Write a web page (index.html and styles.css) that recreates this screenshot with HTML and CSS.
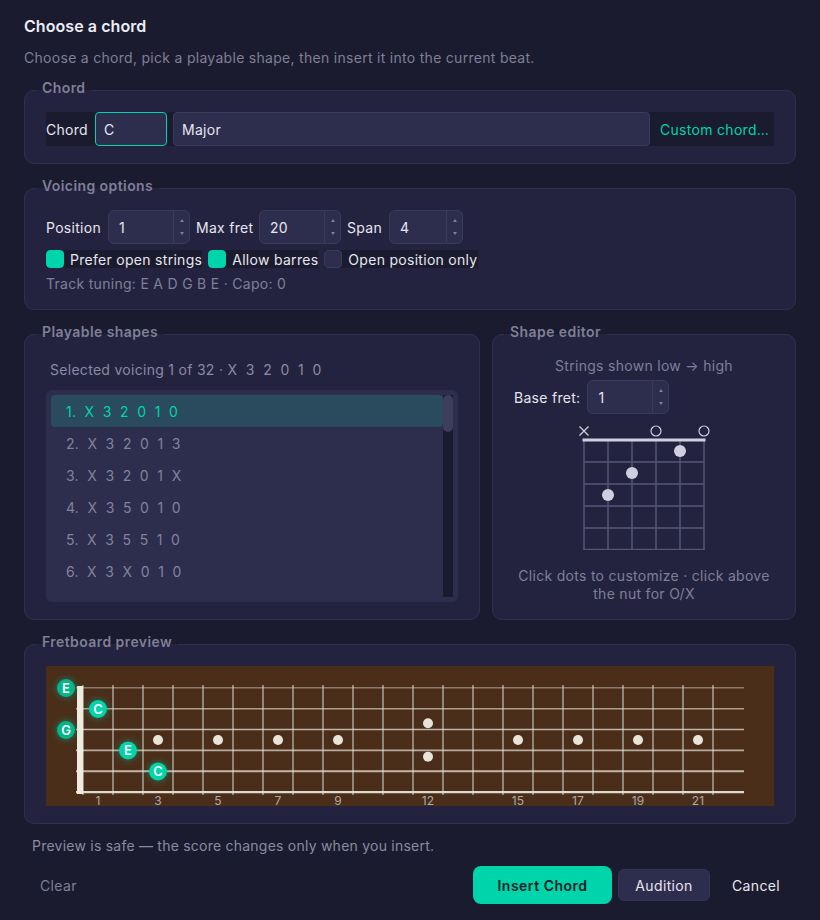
FILE: index.html
```html
<!DOCTYPE html>
<html lang="en">
<head>
<meta charset="utf-8">
<title>Choose a chord</title>
<link rel="stylesheet" href="styles.css">
</head>
<body>
<main class="dialog">
  <h1 class="title">Choose a chord</h1>
  <p class="subtitle">Choose a chord, pick a playable shape, then insert it into the current beat.</p>

  <fieldset class="group group-chord">
    <legend>Chord</legend>
    <div class="chord-row">
      <span class="dark-label">Chord</span>
      <div class="field field-root">C</div>
      <div class="gap-dark"></div>
      <div class="field field-quality">Major</div>
      <button class="link-btn">Custom chord…</button>
    </div>
  </fieldset>

  <fieldset class="group group-voicing">
    <legend>Voicing options</legend>
    <div class="spin-row">
      <span class="lbl lbl-pos">Position</span>
      <div class="spin w82"><span class="spin-val">1</span><span class="spin-btns"><i class="up"></i><i class="down"></i></span></div>
      <span class="lbl lbl-max">Max fret</span>
      <div class="spin w82"><span class="spin-val">20</span><span class="spin-btns"><i class="up"></i><i class="down"></i></span></div>
      <span class="lbl lbl-span">Span</span>
      <div class="spin w74"><span class="spin-val">4</span><span class="spin-btns"><i class="up"></i><i class="down"></i></span></div>
    </div>
    <div class="check-row">
      <label class="check"><span class="box on"></span><span class="check-text">Prefer open strings</span></label>
      <label class="check"><span class="box on"></span><span class="check-text">Allow barres</span></label>
      <label class="check"><span class="box"></span><span class="check-text">Open position only</span></label>
    </div>
    <p class="tuning">Track tuning: E A D G B E · Capo: 0</p>
  </fieldset>

  <div class="middle">
    <fieldset class="group group-shapes">
      <legend>Playable shapes</legend>
      <p class="selected">Selected voicing 1 of 32 · X  3  2  0  1  0</p>
      <div class="list">
        <ul class="items">
          <li class="item active">1.  X  3  2  0  1  0</li>
          <li class="item">2.  X  3  2  0  1  3</li>
          <li class="item">3.  X  3  2  0  1  X</li>
          <li class="item">4.  X  3  5  0  1  0</li>
          <li class="item">5.  X  3  5  5  1  0</li>
          <li class="item">6.  X  3  X  0  1  0</li>
        </ul>
        <div class="scrollbar"><div class="thumb"></div></div>
      </div>
    </fieldset>

    <fieldset class="group group-editor">
      <legend>Shape editor</legend>
      <p class="strings-note">Strings shown low → high</p>
      <div class="base-row">
        <span class="lbl">Base fret:</span>
        <div class="spin w82"><span class="spin-val">1</span><span class="spin-btns"><i class="up"></i><i class="down"></i></span></div>
      </div>
      <svg class="chord-svg" width="144" height="136" viewBox="0 0 144 136" aria-label="Chord diagram">
        <g stroke="#55557a" stroke-width="1.5" fill="none">
          <path d="M12 26V136M36 26V136M60 26V136M84 26V136M108 26V136M132 26V136"/>
          <path d="M12 48H132M12 70H132M12 92H132M12 114H132M11.2 135.5H132.8"/>
        </g>
        <path d="M10.500 26H133.500" stroke="#cfcfe0" stroke-width="3"/>
        <path d="M7.500 12.500L16.500 21.500M16.500 12.500L7.500 21.500" stroke="#cfcfe0" stroke-width="1.300" fill="none"/>
        <circle cx="84" cy="17" r="5" fill="none" stroke="#cfcfe0" stroke-width="1.200"/>
        <circle cx="132" cy="17" r="5" fill="none" stroke="#cfcfe0" stroke-width="1.200"/>
        <g fill="#cfcfe0">
          <circle cx="36" cy="81" r="6"/>
          <circle cx="60" cy="59" r="6"/>
          <circle cx="108" cy="37" r="6"/>
        </g>
      </svg>
      <p class="editor-note">Click dots to customize · click above the nut for O/X</p>
    </fieldset>
  </div>

  <fieldset class="group group-fretboard">
    <legend>Fretboard preview</legend>
    <svg class="fretboard" width="728" height="140" viewBox="0 0 728 140" aria-label="Fretboard">
      <defs>
        <pattern id="grain" width="4" height="4" patternUnits="userSpaceOnUse">
          <rect width="1" height="1" fill="#3f2714"/>
        </pattern>
        <filter id="glow" x="-60%" y="-60%" width="220%" height="220%">
          <feGaussianBlur stdDeviation="3"/>
        </filter>
      </defs>
      <rect width="728" height="140" fill="#4a2e1a"/>
      <rect width="728" height="140" fill="url(#grain)" opacity=".7"/>
      <g stroke="#a8a498" stroke-width="1.500">
        <path d="M37 19V129M67 19V129M97 19V129M127 19V129M157 19V129M187 19V129M217 19V129M247 19V129M277 19V129M307 19V129M337 19V129M367 19V129M397 19V129M427 19V129M457 19V129M487 19V129M517 19V129M547 19V129M577 19V129M607 19V129M637 19V129M667 19V129"/>
      </g>
      <g stroke="#e8e4d8">
        <path d="M30 21.800H698" stroke-width="1.500" opacity=".42"/>
        <path d="M30 42.700H698" stroke-width="1.500" opacity=".62"/>
        <path d="M30 63.600H698" stroke-width="1.500" opacity=".75"/>
        <path d="M30 84.400H698" stroke-width="1.800" opacity=".7"/>
        <path d="M30 105.300H698" stroke-width="2" opacity=".75"/>
        <path d="M30 126.200H698" stroke-width="2.200" opacity=".95"/>
      </g>
      <rect x="31" y="20" width="6" height="108" fill="#efebdf"/>
      <g fill="#e8e4d8">
        <circle cx="112" cy="74" r="5"/>
        <circle cx="172" cy="74" r="5"/>
        <circle cx="232" cy="74" r="5"/>
        <circle cx="292" cy="74" r="5"/>
        <circle cx="382" cy="57.300" r="5"/>
        <circle cx="382" cy="90.700" r="5"/>
        <circle cx="472" cy="74" r="5"/>
        <circle cx="532" cy="74" r="5"/>
        <circle cx="592" cy="74" r="5"/>
        <circle cx="652" cy="74" r="5"/>
      </g>
      <g class="fret-nums">
        <text x="52" y="139">1</text>
        <text x="112" y="139">3</text>
        <text x="172" y="139">5</text>
        <text x="232" y="139">7</text>
        <text x="292" y="139">9</text>
        <text x="382" y="139">12</text>
        <text x="472" y="139">15</text>
        <text x="532" y="139">17</text>
        <text x="592" y="139">19</text>
        <text x="652" y="139">21</text>
      </g>
      <g fill="#00d4aa" opacity=".35" filter="url(#glow)">
        <circle cx="20" cy="22" r="10"/>
        <circle cx="52" cy="43" r="10"/>
        <circle cx="20" cy="64" r="10"/>
        <circle cx="82" cy="84.500" r="10"/>
        <circle cx="112" cy="105.500" r="10"/>
      </g>
      <g>
        <circle cx="20" cy="22" r="9" fill="#00b78c"/>
        <circle cx="52" cy="43" r="9" fill="#00d4aa"/>
        <circle cx="20" cy="64" r="9" fill="#00b78c"/>
        <circle cx="82" cy="84.500" r="9" fill="#00d4aa"/>
        <circle cx="112" cy="105.500" r="9" fill="#00d4aa"/>
      </g>
      <g class="note-names">
        <text x="20" y="26.500">E</text>
        <text x="52" y="47.500">C</text>
        <text x="20" y="68.500">G</text>
        <text x="82" y="89">E</text>
        <text x="112" y="110">C</text>
      </g>
    </svg>
  </fieldset>

  <p class="preview-note">Preview is safe — the score changes only when you insert.</p>

  <footer class="actions">
    <button class="btn-clear">Clear</button>
    <div class="actions-right">
      <button class="btn-insert">Insert Chord</button>
      <button class="btn-audition">Audition</button>
      <button class="btn-cancel">Cancel</button>
    </div>
  </footer>
</main>
</body>
</html>
```

FILE: styles.css
```css
* { box-sizing: border-box; }
html, body { margin: 0; padding: 0; }
body {
  width: 820px;
  height: 920px;
  overflow: hidden;
  background: #1a1b2e;
  color: #e6e6f0;
  font-family: Inter, "Noto Sans", "Liberation Sans", sans-serif;
  font-size: 14px;
  letter-spacing: .29px;
}
p, ul, h1 { margin: 0; padding: 0; }
.dialog { padding: 17px 24px 0; display: flex; flex-direction: column; }
.title { font-size: 16px; font-weight: 600; line-height: 19px; color: #ecedf4; letter-spacing: .07px; }
.subtitle { margin-top: 13px; line-height: 17px; color: #7f7f98; height: 31px; }

.group {
  margin: 0;
  min-width: 0;
  padding: 0 21px 0;
  background: #23233f;
  border: 1px solid #2f2f50;
  border-radius: 10px;
}
.group legend {
  margin-left: -10px;
  padding: 0 6px 6px;
  font-size: 14px;
  line-height: 15px;
  font-weight: 600;
  color: #7f7f98;
  letter-spacing: .42px;
}
.group-chord { height: 84px; margin-bottom: 14px; }
.group-voicing { height: 132px; margin-bottom: 14px; }
.group-fretboard { height: 190px; }

.chord-row { display: flex; height: 34px; margin-top: 11px; background: #1a1b2e; }
.dark-label { width: 49px; height: 34px; line-height: 36px; text-align: left; color: #e6e6f0; }
.field {
  height: 34px;
  line-height: 34px;
  padding-left: 8px;
  background: #2d2d4e;
  border: 1px solid #3a3a5c;
  border-radius: 4px;
}
.field-root { width: 72px; border-color: #00d4aa; }
.gap-dark { width: 6px; }
.field-quality { width: 477px; }
.link-btn {
  flex: 1;
  border: 0;
  padding: 1px 0 0 10px;
  text-align: left;
  background: transparent;
  color: #00d4aa;
  font: inherit;
  letter-spacing: .3px;
}

.spin-row { display: flex; align-items: center; gap: 6px; margin-top: 11px; }
.lbl { height: 34px; line-height: 36px; color: #e6e6f0; white-space: nowrap; }
.lbl-pos { width: 56px; }
.lbl-max { width: 57px; }
.lbl-span { width: 36px; }
.spin {
  display: flex;
  height: 34px;
  background: #2d2d4e;
  border: 1px solid #3a3a5c;
  border-radius: 6px;
}
.w82 { width: 82px; }
.w74 { width: 74px; }
.spin-val { flex: 1; padding-left: 10px; line-height: 34px; }
.spin-btns {
  width: 16px;
  display: flex;
  flex-direction: column;
  align-items: center;
  justify-content: space-around;
  border-left: 1px solid #3a3a5c;
  padding: 3px 0;
}
.spin-btns i { display: block; width: 0; height: 0; border-left: 2.5px solid transparent; border-right: 2.5px solid transparent; }
.spin-btns .up { border-bottom: 3px solid #7f7f98; }
.spin-btns .down { border-top: 3px solid #7f7f98; }

.check-row { display: flex; gap: 6px; margin-top: 6px; }
.check { display: flex; align-items: flex-start; gap: 6px; background: #1a1b2e; height: 18px; }
.box { width: 18px; height: 18px; border-radius: 4px; background: #2d2d4e; border: 1px solid #3a3a5c; }
.box.on { background: #00d4aa; border-color: #00d4aa; }
.check-text { line-height: 20px; color: #e6e6f0; }
.tuning { margin-top: 7px; line-height: 17px; color: #7f7f98; }

.middle { display: flex; gap: 12px; margin-bottom: 14px; height: 296px; }
.group-shapes { width: 456px; height: 296px; }
.group-editor { width: 304px; height: 296px; }

.selected { margin: 16px 0 0 4px; line-height: 17px; color: #8a8aa2; white-space: pre; }
.list {
  display: flex;
  height: 212px;
  margin-top: 12px;
  padding: 5px;
  background: #2d2d4e;
  border-radius: 6px;
}
.items { flex: 1; list-style: none; }
.item {
  height: 32px;
  line-height: 34px;
  padding-left: 15px;
  border-radius: 4px;
  color: #82829c;
  white-space: pre;
  letter-spacing: .25px;
}
.item.active { background: #2a4a5e; color: #00d4aa; }
.scrollbar { width: 10px; background: #1a1b2e; }
.thumb { height: 37px; background: #3d3d5c; border-radius: 5px; }

.group-editor { display: flex; flex-direction: column; }
.strings-note { text-align: center; line-height: 17px; margin-top: 12px; color: #7f7f98; }
.base-row { display: flex; gap: 7px; margin-top: 6px; }
.chord-svg { display: block; margin: 0 auto; }
.editor-note { text-align: center; line-height: 18px; margin-top: 17px; color: #7f7f98; }

.fretboard { display: block; margin-top: 11px; overflow: visible; }
.fret-nums text { font-size: 12px; fill: #aeaaa6; text-anchor: middle; letter-spacing: .2px; font-family: Inter, "Liberation Sans", sans-serif; }
.note-names text { font-size: 13px; font-weight: 600; fill: #fff; text-anchor: middle; letter-spacing: 0; font-family: Inter, "Liberation Sans", sans-serif; }

.preview-note { margin: 13px 0 0 8px; line-height: 17px; color: #8a8aa2; letter-spacing: .23px; }
.actions { display: flex; align-items: center; justify-content: space-between; margin-top: 12px; }
.actions button { font: inherit; border: 0; letter-spacing: .35px; }
.btn-clear { background: transparent; color: #7f7f98; padding: 0 16px; }
.actions-right { display: flex; align-items: center; gap: 6px; }
.actions .btn-insert {
  width: 139px; height: 38px;
  border-radius: 8px;
  background: #00d4aa;
  color: #102028;
  font-weight: 600;
  letter-spacing: .5px;
}
.actions .btn-audition {
  width: 92px; height: 32px;
  border-radius: 6px;
  background: #2d2d4e;
  color: #e6e6f0;
  border: 1px solid #33335a;
}
.btn-cancel { width: 80px; height: 32px; background: transparent; color: #e6e6f0; }
```
